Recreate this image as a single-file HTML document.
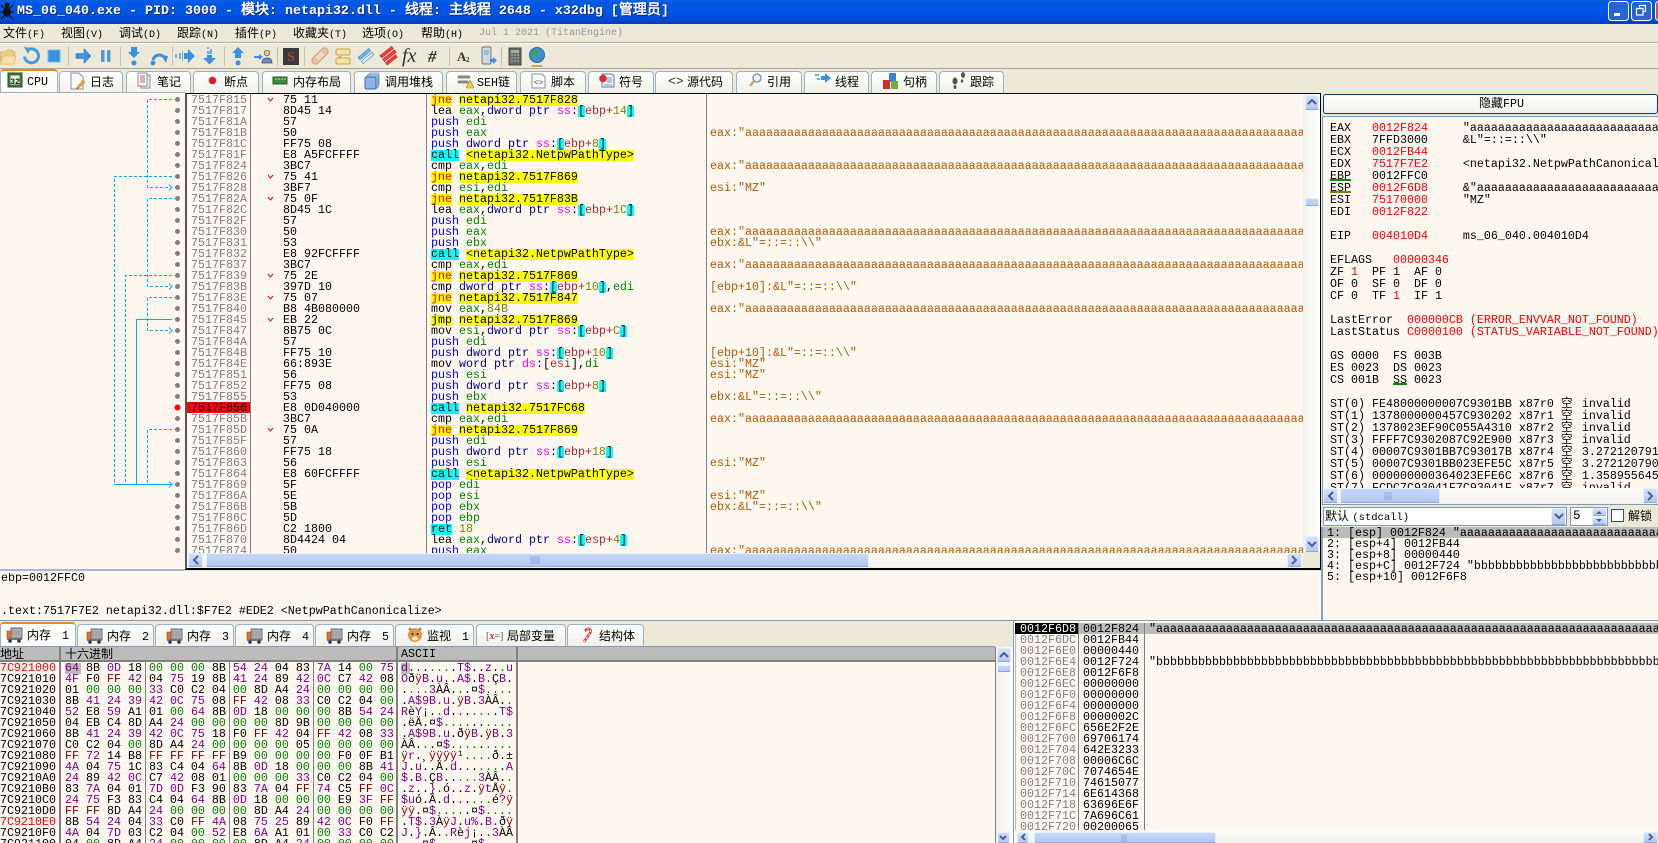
<!DOCTYPE html>
<html><head><meta charset="utf-8"><title>x32dbg</title>
<style>
html,body{margin:0;padding:0}
body{width:1658px;height:843px;overflow:hidden;position:relative;background:#ECE9D8;color:#000;font-family:"Liberation Sans","WenQuanYi Zen Hei",sans-serif}
div,span,pre{position:absolute;box-sizing:border-box}
pre span,pre *{position:static}
pre{margin:0;font:11.67px/11px "Liberation Mono","WenQuanYi Zen Hei",monospace;white-space:pre;overflow:hidden}
.dp{top:94px;height:459px;padding-top:1px}
f{font-size:14px}
i{font-style:normal;color:#008000}
b{font-weight:normal;color:#800080}
s{text-decoration:none;color:#800000}
u{text-decoration:none;color:#800080;background:#bbb;display:inline-block;height:11px;vertical-align:top;padding-right:2px;margin-right:-2px}
j,y,c{display:inline-block;height:11px;line-height:11px;vertical-align:top}
j{background:#ff0;color:#f00}
y{background:#ff0;color:#000}
c{background:#0ff;color:#000}
h{display:inline;font-size:inherit;font-weight:normal;color:#0000ff}
n{color:#000080}
m{color:#f0f}
r{color:#a52a2a}
o{color:#808000}
.bg{background:#FFF8F0}
.menu{top:24px;height:17px;font:12px/17px "WenQuanYi Zen Hei","Noto Sans CJK SC",sans-serif;white-space:pre}
.menu em{font:10px "Liberation Mono",monospace}
.t{top:71px;height:22px;border:1px solid #9db2c6;border-bottom:0;border-radius:4px 4px 0 0;background:linear-gradient(#fff,#f1f0ea)}
.t2{top:624px;height:22px;border:1px solid #9db2c6;border-bottom:0;border-radius:4px 4px 0 0;background:linear-gradient(#fff,#f1f0ea)}
.sel{border-top:2px solid #e68b2c;background:#fdfdfb}
.l{top:71px;height:21px;font:12px/21px "WenQuanYi Zen Hei","Noto Sans CJK SC",sans-serif;white-space:pre}
.l em{font:11.67px "Liberation Mono",monospace}
.l2{top:625px;height:21px;font:12px/21px "WenQuanYi Zen Hei","Noto Sans CJK SC",sans-serif;white-space:pre}
.l2 em{font:11.67px "Liberation Mono",monospace;margin-left:4px}
.v{background:#808080;width:1px}
.trk{background:linear-gradient(90deg,#f1f0ea,#fefefe)}
.trh{background:linear-gradient(#fdfdfb,#f1f0ea)}
.btn{background:linear-gradient(#d5e1fc,#b4c8f6);border:1px solid #e8eefb;border-bottom-color:#8fa8dc;border-radius:2px}
.th{background:linear-gradient(#c8d8fb,#b3c8f5);border:1px solid #e8eefb;border-bottom-color:#8fa8dc;border-radius:2px}
</style></head>
<body>
<!-- title bar -->
<div style="left:0;top:0;width:1658px;height:24px;background:linear-gradient(#0a5fe6 0,#0258e4 3px,#0054e3 55%,#0148d0 85%,#003cb4 100%)"></div>
<span style="left:17px;top:3px;height:18px;font:bold 13.33px/17px 'Liberation Mono','WenQuanYi Zen Hei',monospace;color:#fff;text-shadow:1px 1px #0a2a8a;white-space:pre">MS_06_040.exe - PID: 3000 - <f>模块</f>: netapi32.dll - <f>线程</f>: <f>主线程</f> 2648 - x32dbg [<f>管理员</f>]</span>
<!-- menu -->
<div style="left:0;top:42px;width:1658px;height:1px;background:#b5b29f"></div>
<div style="left:0;top:43px;width:1658px;height:1px;background:#fff"></div>
<div style="left:0;top:68px;width:1658px;height:1px;background:#aca899"></div>
<span class="menu" style="left:3px">文件<em>(F)</em></span>
<span class="menu" style="left:61px">视图<em>(V)</em></span>
<span class="menu" style="left:119px">调试<em>(D)</em></span>
<span class="menu" style="left:177px">跟踪<em>(N)</em></span>
<span class="menu" style="left:235px">插件<em>(P)</em></span>
<span class="menu" style="left:293px">收藏夹<em>(T)</em></span>
<span class="menu" style="left:362px">选项<em>(O)</em></span>
<span class="menu" style="left:421px">帮助<em>(H)</em></span>
<span style="left:479px;top:25px;font:10px/17px 'Liberation Mono',monospace;color:#999;white-space:pre">Jul 1 2021 (TitanEngine)</span>
<!-- tabs -->
<div class="t sel" style="left:0;top:69px;width:58px;height:24px"></div>
<div class="t" style="left:59px;width:64px"></div>
<div class="t" style="left:126px;width:65px"></div>
<div class="t" style="left:193px;width:66px"></div>
<div class="t" style="left:262px;width:89px"></div>
<div class="t" style="left:354px;width:89px"></div>
<div class="t" style="left:446px;width:71px"></div>
<div class="t" style="left:520px;width:66px"></div>
<div class="t" style="left:588px;width:66px"></div>
<div class="t" style="left:655px;width:78px"></div>
<div class="t" style="left:736px;width:66px"></div>
<div class="t" style="left:804px;width:65px"></div>
<div class="t" style="left:871px;width:66px"></div>
<div class="t" style="left:939px;width:65px"></div>
<span class="l" style="left:27px;top:70px"><em>CPU</em></span>
<span class="l" style="left:90px">日志</span>
<span class="l" style="left:157px">笔记</span>
<span class="l" style="left:224px">断点</span>
<span class="l" style="left:293px">内存布局</span>
<span class="l" style="left:385px">调用堆栈</span>
<span class="l" style="left:477px"><em>SEH</em>链</span>
<span class="l" style="left:551px">脚本</span>
<span class="l" style="left:619px">符号</span>
<span class="l" style="left:687px">源代码</span>
<span class="l" style="left:767px">引用</span>
<span class="l" style="left:835px">线程</span>
<span class="l" style="left:903px">句柄</span>
<span class="l" style="left:970px">跟踪</span>
<!-- graph / disasm -->
<div class="bg" style="left:0;top:93px;width:185px;height:476px"></div>
<div style="left:0;top:92px;width:185px;height:1px;background:#9db2c6"></div>
<div style="left:0;top:569px;width:185px;height:2px;background:#a8bacb"></div>
<div class="bg" style="left:185px;top:93px;width:1136px;height:477px;border:1px solid #000;border-width:1px 1px 2px 1px;border-left:2px solid #555"></div>
<div style="left:187px;top:402px;width:63px;height:11px;background:#f00"></div>
<div class="v" style="left:250px;top:94px;height:459px"></div>
<div class="v" style="left:426px;top:94px;height:459px"></div>
<div class="v" style="left:706px;top:94px;height:459px"></div>
<pre class="dp" style="left:191px;width:59px;color:#808080">
7517F815
7517F817
7517F81A
7517F81B
7517F81C
7517F81F
7517F824
7517F826
7517F828
7517F82A
7517F82C
7517F82F
7517F830
7517F831
7517F832
7517F837
7517F839
7517F83B
7517F83E
7517F840
7517F845
7517F847
7517F84A
7517F84B
7517F84E
7517F851
7517F852
7517F855
<span style="color:#000">7517F856</span>
7517F85B
7517F85D
7517F85F
7517F860
7517F863
7517F864
7517F869
7517F86A
7517F86B
7517F86C
7517F86D
7517F870
7517F874</pre>
<pre class="dp" style="left:283px;width:140px">
75 11
8D45 14
57
50
FF75 08
E8 A5FCFFFF
3BC7
75 41
3BF7
75 0F
8D45 1C
57
50
53
E8 92FCFFFF
3BC7
75 2E
397D 10
75 07
B8 4B080000
EB 22
8B75 0C
57
FF75 10
66:893E
56
FF75 08
53
E8 0D040000
3BC7
75 0A
57
FF75 18
56
E8 60FCFFFF
5F
5E
5B
5D
C2 1800
8D4424 04
50</pre>
<pre class="dp" style="left:431px;width:274px">
<j>jne</j> <y>netapi32.7517F828</y>
lea <i>eax</i>,<n>dword ptr</n> <m>ss</m>:<c>[</c><r>ebp+</r><o>14</o><c>]</c>
<h>push</h> <i>edi</i>
<h>push</h> <i>eax</i>
<h>push</h> <n>dword ptr</n> <m>ss</m>:<c>[</c><r>ebp+</r><o>8</o><c>]</c>
<c>call</c> <y>&lt;netapi32.NetpwPathType&gt;</y>
cmp <i>eax</i>,<i>edi</i>
<j>jne</j> <y>netapi32.7517F869</y>
cmp <i>esi</i>,<i>edi</i>
<j>jne</j> <y>netapi32.7517F83B</y>
lea <i>eax</i>,<n>dword ptr</n> <m>ss</m>:<c>[</c><r>ebp+</r><o>1C</o><c>]</c>
<h>push</h> <i>edi</i>
<h>push</h> <i>eax</i>
<h>push</h> <i>ebx</i>
<c>call</c> <y>&lt;netapi32.NetpwPathType&gt;</y>
cmp <i>eax</i>,<i>edi</i>
<j>jne</j> <y>netapi32.7517F869</y>
cmp <n>dword ptr</n> <m>ss</m>:<c>[</c><r>ebp+</r><o>10</o><c>]</c>,<i>edi</i>
<j>jne</j> <y>netapi32.7517F847</y>
mov <i>eax</i>,<o>84B</o>
<y>jmp</y> <y>netapi32.7517F869</y>
mov <i>esi</i>,<n>dword ptr</n> <m>ss</m>:<c>[</c><r>ebp+</r><o>C</o><c>]</c>
<h>push</h> <i>edi</i>
<h>push</h> <n>dword ptr</n> <m>ss</m>:<c>[</c><r>ebp+</r><o>10</o><c>]</c>
mov <n>word ptr</n> <m>ds</m>:[<r>esi</r>],<i>di</i>
<h>push</h> <i>esi</i>
<h>push</h> <n>dword ptr</n> <m>ss</m>:<c>[</c><r>ebp+</r><o>8</o><c>]</c>
<h>push</h> <i>ebx</i>
<c>call</c> <y>netapi32.7517FC68</y>
cmp <i>eax</i>,<i>edi</i>
<j>jne</j> <y>netapi32.7517F869</y>
<h>push</h> <i>edi</i>
<h>push</h> <n>dword ptr</n> <m>ss</m>:<c>[</c><r>ebp+</r><o>18</o><c>]</c>
<h>push</h> <i>esi</i>
<c>call</c> <y>&lt;netapi32.NetpwPathType&gt;</y>
<h>pop</h> <i>edi</i>
<h>pop</h> <i>esi</i>
<h>pop</h> <i>ebx</i>
<h>pop</h> <i>ebp</i>
<c>ret</c> <o>18</o>
lea <i>eax</i>,<n>dword ptr</n> <m>ss</m>:<c>[</c><r>esp+</r><o>4</o><c>]</c>
<h>push</h> <i>eax</i></pre>
<pre class="dp" style="left:710px;width:593px;color:#b05800">



eax:"aaaaaaaaaaaaaaaaaaaaaaaaaaaaaaaaaaaaaaaaaaaaaaaaaaaaaaaaaaaaaaaaaaaaaaaaaaaaaaaaaaaaaaaa


eax:"aaaaaaaaaaaaaaaaaaaaaaaaaaaaaaaaaaaaaaaaaaaaaaaaaaaaaaaaaaaaaaaaaaaaaaaaaaaaaaaaaaaaaaaa

esi:"MZ"



eax:"aaaaaaaaaaaaaaaaaaaaaaaaaaaaaaaaaaaaaaaaaaaaaaaaaaaaaaaaaaaaaaaaaaaaaaaaaaaaaaaaaaaaaaaa
ebx:&amp;L"=::=::\\"

eax:"aaaaaaaaaaaaaaaaaaaaaaaaaaaaaaaaaaaaaaaaaaaaaaaaaaaaaaaaaaaaaaaaaaaaaaaaaaaaaaaaaaaaaaaa

[ebp+10]:&amp;L"=::=::\\"

eax:"aaaaaaaaaaaaaaaaaaaaaaaaaaaaaaaaaaaaaaaaaaaaaaaaaaaaaaaaaaaaaaaaaaaaaaaaaaaaaaaaaaaaaaaa



[ebp+10]:&amp;L"=::=::\\"
esi:"MZ"
esi:"MZ"

ebx:&amp;L"=::=::\\"

eax:"aaaaaaaaaaaaaaaaaaaaaaaaaaaaaaaaaaaaaaaaaaaaaaaaaaaaaaaaaaaaaaaaaaaaaaaaaaaaaaaaaaaaaaaa



esi:"MZ"


esi:"MZ"
ebx:&amp;L"=::=::\\"



eax:"aaaaaaaaaaaaaaaaaaaaaaaaaaaaaaaaaaaaaaaaaaaaaaaaaaaaaaaaaaaaaaaaaaaaaaaaaaaaaaaaaaaaaaaa</pre>
<!-- disasm scrollbars -->
<div class="trk" style="left:1303px;top:94px;width:17px;height:458px"></div>
<div class="btn" style="left:1305px;top:95px;width:14px;height:15px"></div>
<div class="th" style="left:1305px;top:198px;width:14px;height:8px"></div>
<div class="btn" style="left:1305px;top:536px;width:14px;height:16px"></div>
<div style="left:1303px;top:552px;width:17px;height:16px;background:#ECE9D8"></div>
<div class="trh" style="left:187px;top:553px;width:1116px;height:15px"></div>
<div class="btn" style="left:188px;top:553px;width:15px;height:14px"></div>
<div class="th" style="left:206px;top:553px;width:663px;height:14px"></div>
<div class="btn" style="left:1287px;top:553px;width:15px;height:14px"></div>
<!-- register panel -->
<div style="left:1323px;top:94px;width:335px;height:20px;border:1px solid #003c74;border-radius:3px;background:linear-gradient(#fff,#f0f0ea)"></div>
<span style="left:1479px;top:96px;font:12px/16px 'WenQuanYi Zen Hei','Liberation Mono',sans-serif;white-space:pre">隐藏<em style="font:11.67px 'Liberation Mono',monospace">FPU</em></span>
<div class="bg" style="left:1322px;top:116px;width:336px;height:389px;border:1px solid #7f9db9;border-right:0"></div>
<div style="left:1372px;top:159px;width:56px;height:12px;background:#eee"></div>
<pre style="left:1330px;top:122px;width:328px;height:366px;line-height:12px">
EAX   <span style="color:#f00">0012F824</span>     "aaaaaaaaaaaaaaaaaaaaaaaaaaaaaaaaaaaaaa
EBX   7FFD3000     &amp;L"=::=::\\"
ECX   <span style="color:#f00">0012FB44</span>
EDX   <span style="color:#f00">7517F7E2</span>     &lt;netapi32.NetpwPathCanonicalize&gt;
EBP   0012FFC0
ESP   <span style="color:#f00">0012F6D8</span>     &amp;"aaaaaaaaaaaaaaaaaaaaaaaaaaaaaaaaaaaaa
ESI   <span style="color:#f00">75170000</span>     "MZ"
EDI   <span style="color:#f00">0012F822</span>

EIP   <span style="color:#f00">004010D4</span>     ms_06_040.004010D4

EFLAGS   <span style="color:#f00">00000346</span>
ZF <span style="color:#f00">1</span>  PF 1  AF 0
OF 0  SF 0  DF 0
CF 0  TF <span style="color:#f00">1</span>  IF 1

LastError  <span style="color:#f00">000000CB (ERROR_ENVVAR_NOT_FOUND)</span>
LastStatus <span style="color:#f00">C0000100 (STATUS_VARIABLE_NOT_FOUND)</span>

GS 0000  FS 003B
ES 0023  DS 0023
CS 001B  SS 0023

ST(0) FE48000000007C9301BB x87r0 <span style="display:inline-block;width:14px">空</span> invalid
ST(1) 1378000000457C930202 x87r1 <span style="display:inline-block;width:14px">空</span> invalid
ST(2) 1378023EF90C055A4310 x87r2 <span style="display:inline-block;width:14px">空</span> invalid
ST(3) FFFF7C9302087C92E900 x87r3 <span style="display:inline-block;width:14px">空</span> invalid
ST(4) 00007C9301BB7C93017B x87r4 <span style="display:inline-block;width:14px">空</span> 3.2721207912
ST(5) 00007C9301BB023EFE5C x87r5 <span style="display:inline-block;width:14px">空</span> 3.2721207905
ST(6) 000000000364023EFE6C x87r6 <span style="display:inline-block;width:14px">空</span> 1.3589556451
ST(7) FCDC7C93041F7C93041F x87r7 <span style="display:inline-block;width:14px">空</span> invalid</pre>
<div style="left:1330px;top:179px;width:21px;height:2px;background:#009000"></div>
<div style="left:1330px;top:191px;width:21px;height:2px;background:#808000"></div>
<div style="left:1393px;top:383px;width:14px;height:2px;background:#009000"></div>
<div class="trh" style="left:1323px;top:488px;width:335px;height:16px"></div>
<div class="btn" style="left:1323px;top:488px;width:15px;height:15px"></div>
<div class="th" style="left:1340px;top:488px;width:100px;height:15px"></div>
<div class="btn" style="left:1643px;top:488px;width:15px;height:15px"></div>
<!-- call convention row -->
<div style="left:1323px;top:507px;width:244px;height:19px;background:#fff;border:1px solid #7f9db9"></div>
<span style="left:1325px;top:508px;font:12px/17px 'WenQuanYi Zen Hei',sans-serif;white-space:pre">默认 <em style="font:10.5px 'Liberation Mono',monospace">(stdcall)</em></span>
<div class="btn" style="left:1551px;top:508px;width:15px;height:17px"></div>
<div style="left:1570px;top:507px;width:38px;height:19px;background:#fff;border:1px solid #7f9db9"></div>
<span style="left:1573px;top:508px;font:12.5px/17px 'Liberation Mono',monospace">5</span>
<div class="btn" style="left:1592px;top:508px;width:15px;height:8px"></div>
<div class="btn" style="left:1592px;top:517px;width:15px;height:8px"></div>
<div style="left:1611px;top:509px;width:13px;height:13px;background:#fff;border:1px solid #1c5180"></div>
<span style="left:1628px;top:508px;font:12px/17px 'WenQuanYi Zen Hei',sans-serif">解锁</span>
<div class="bg" style="left:1321px;top:527px;width:337px;height:94px;border-left:2px solid #8aa2ba"></div>
<div style="left:1323px;top:527px;width:335px;height:11px;background:#bbb"></div>
<pre style="left:1327px;top:527px;padding-top:1px;width:331px;height:61px">
1: [esp] 0012F824 "aaaaaaaaaaaaaaaaaaaaaaaaaaaaaaaaaaaaaaaaaaaaa
2: [esp+4] 0012FB44
3: [esp+8] 00000440
4: [esp+C] 0012F724 "bbbbbbbbbbbbbbbbbbbbbbbbbbbbbbbbbbbbbbbbbb
5: [esp+10] 0012F6F8</pre>
<!-- info panel -->
<div class="bg" style="left:0;top:571px;width:1321px;height:50px"></div>
<pre style="left:1px;top:573px;width:1000px;height:47px">
ebp=0012FFC0


.text:7517F7E2 netapi32.dll:$F7E2 #EDE2 &lt;NetpwPathCanonicalize&gt;</pre>
<div style="left:0;top:620px;width:1658px;height:1px;background:#7f9db9"></div>
<!-- memory tabs -->
<div class="t2 sel" style="left:0;top:622px;width:76px;height:25px"></div>
<div class="t2" style="left:77px;width:77px"></div>
<div class="t2" style="left:155px;width:79px"></div>
<div class="t2" style="left:235px;width:79px"></div>
<div class="t2" style="left:315px;width:79px"></div>
<div class="t2" style="left:395px;width:79px"></div>
<div class="t2" style="left:476px;width:90px"></div>
<div class="t2" style="left:567px;width:77px"></div>
<span class="l2" style="left:27px;top:624px">内存<em> 1</em></span>
<span class="l2" style="left:107px">内存<em> 2</em></span>
<span class="l2" style="left:187px">内存<em> 3</em></span>
<span class="l2" style="left:267px">内存<em> 4</em></span>
<span class="l2" style="left:347px">内存<em> 5</em></span>
<span class="l2" style="left:427px">监视<em> 1</em></span>
<span class="l2" style="left:507px">局部变量</span>
<span class="l2" style="left:599px">结构体</span>
<!-- hex dump -->
<div style="left:0;top:646px;width:995px;height:1px;background:#7f9db9"></div>
<div class="bg" style="left:0;top:647px;width:1014px;height:196px"></div>
<div style="left:0;top:647px;width:995px;height:13px;background:#bcbcbc"></div>
<div style="left:0;top:660px;width:995px;height:2px;background:#808080"></div>
<div class="v" style="left:59px;top:647px;height:196px;width:2px"></div>
<div class="v" style="left:145px;top:662px;height:181px"></div>
<div class="v" style="left:229px;top:662px;height:181px"></div>
<div class="v" style="left:313px;top:662px;height:181px"></div>
<div class="v" style="left:396px;top:647px;height:196px;width:2px"></div>
<div class="v" style="left:516px;top:647px;height:196px;width:2px"></div>
<span style="left:0;top:647px;font:12px/14px 'WenQuanYi Zen Hei',sans-serif">地址</span>
<span style="left:65px;top:647px;font:12px/14px 'WenQuanYi Zen Hei',sans-serif">十六进制</span>
<span style="left:401px;top:647px;font:11.67px/14px 'Liberation Mono',monospace">ASCII</span>
<pre style="left:0;top:662px;padding-top:1px;width:59px;height:181px">
<span style="color:#f00">7C921000</span>
7C921010
7C921020
7C921030
7C921040
7C921050
7C921060
7C921070
7C921080
7C921090
7C9210A0
7C9210B0
7C9210C0
7C9210D0
<span style="color:#f00">7C9210E0</span>
7C9210F0
7C921100</pre>
<pre style="left:65px;top:662px;padding-top:1px;width:331px;height:181px">
<u>64</u> 8B <b>0D</b> 18 <i>00 00 00</i> 8B <b>54 24</b> 04 83 <b>7A</b> 14 <i>00</i> <b>75</b>
<b>4F</b> F0 <s>FF</s> <b>42</b> 04 <b>75</b> 19 8B <b>41 24</b> 89 <b>42 0C</b> C7 <b>42</b> 08
01 <i>00 00 00</i> <b>33</b> C0 C2 04 <i>00</i> 8D A4 <b>24</b> <i>00 00 00 00</i>
8B <b>41 24 39 42 0C 75</b> 08 <s>FF</s> <b>42</b> 08 <b>33</b> C0 C2 04 <i>00</i>
<b>52</b> E8 <b>59</b> A1 01 <i>00</i> <b>64</b> 8B <b>0D</b> 18 <i>00 00 00</i> 8B <b>54 24</b>
04 EB C4 8D A4 <b>24</b> <i>00 00 00 00</i> 8D 9B <i>00 00 00 00</i>
8B <b>41 24 39 42 0C 75</b> 18 F0 <s>FF</s> <b>42</b> 04 <s>FF</s> <b>42</b> 08 <b>33</b>
C0 C2 04 <i>00</i> 8D A4 <b>24</b> <i>00 00 00 00</i> 05 <i>00 00 00 00</i>
<s>FF</s> <b>72</b> 14 B8 <s>FF FF FF FF</s> B9 <i>00 00 00 00</i> F0 0F B1
<b>4A</b> 04 <b>75</b> 1C 83 C4 04 <b>64</b> 8B <b>0D</b> 18 <i>00 00 00</i> 8B <b>41</b>
<b>24</b> 89 <b>42 0C</b> C7 <b>42</b> 08 01 <i>00 00 00</i> <b>33</b> C0 C2 04 <i>00</i>
83 <b>7A</b> 04 01 <b>7D 0D</b> F3 90 83 <b>7A</b> 04 <s>FF</s> <b>74</b> C5 <s>FF</s> <b>0C</b>
<b>24 75</b> F3 83 C4 04 <b>64</b> 8B <b>0D</b> 18 <i>00 00 00</i> E9 <b>3F</b> <s>FF</s>
<s>FF FF</s> 8D A4 <b>24</b> <i>00 00 00 00</i> 8D A4 <b>24</b> <i>00 00 00 00</i>
8B <b>54 24</b> 04 <b>33</b> C0 <s>FF</s> <b>4A</b> 08 <b>75 25</b> 89 <b>42 0C</b> F0 <s>FF</s>
<b>4A</b> 04 <b>7D</b> 03 C2 04 <i>00</i> <b>52</b> E8 <b>6A</b> A1 01 <i>00</i> <b>33</b> C0 C2
04 <i>00</i> 8D A4 <b>24</b> <i>00 00 00 00</i> 8D A4 <b>24</b> <i>00 00 00 00</i></pre>
<pre style="left:401px;top:662px;padding-top:1px;width:115px;height:181px">
<u>d</u>.<b>.</b>.<i>...</i>.<b>T$</b>..<b>z</b>.<i>.</i><b>u</b>
<b>O</b>ð<s>ÿ</s><b>B</b>.<b>u</b>..<b>A$</b>.<b>B.</b>Ç<b>B</b>.
.<i>...</i><b>3</b>ÀÂ.<i>.</i>.¤<b>$</b><i>....</i>
.<b>A$9B.u</b>.<s>ÿ</s><b>B</b>.<b>3</b>ÀÂ.<i>.</i>
<b>R</b>è<b>Y</b>¡.<i>.</i><b>d</b>.<b>.</b>.<i>...</i>.<b>T$</b>
.ëÄ.¤<b>$</b><i>....</i>..<i>....</i>
.<b>A$9B.u</b>.ð<s>ÿ</s><b>B</b>.<s>ÿ</s><b>B</b>.<b>3</b>
ÀÂ.<i>.</i>.¤<b>$</b><i>....</i>.<i>....</i>
<s>ÿ</s><b>r</b>.¸<s>ÿÿÿÿ</s>¹<i>....</i>ð.±
<b>J</b>.<b>u</b>..Ä.<b>d</b>.<b>.</b>.<i>...</i>.<b>A</b>
<b>$</b>.<b>B.</b>Ç<b>B</b>..<i>...</i><b>3</b>ÀÂ.<i>.</i>
.<b>z</b>..<b>}.</b>ó..<b>z</b>.<s>ÿ</s><b>t</b>Å<s>ÿ</s><b>.</b>
<b>$u</b>ó.Ä.<b>d</b>.<b>.</b>.<i>...</i>é<b>?</b><s>ÿ</s>
<s>ÿÿ</s>.¤<b>$</b><i>....</i>.¤<b>$</b><i>....</i>
.<b>T$</b>.<b>3</b>À<s>ÿ</s><b>J</b>.<b>u%</b>.<b>B.</b>ð<s>ÿ</s>
<b>J</b>.<b>}</b>.Â.<i>.</i><b>R</b>è<b>j</b>¡.<i>.</i><b>3</b>ÀÂ
.<i>.</i>.¤<b>$</b><i>....</i>.¤<b>$</b><i>....</i></pre>
<!-- memory scrollbar -->
<div class="trk" style="left:995px;top:647px;width:18px;height:196px;border-left:1px solid #808080"></div>
<div class="btn" style="left:997px;top:648px;width:14px;height:14px"></div>
<div class="th" style="left:997px;top:665px;width:14px;height:7px"></div>
<div class="btn" style="left:997px;top:832px;width:13px;height:11px"></div>
<!-- stack -->
<div class="bg" style="left:1013px;top:621px;width:645px;height:222px;border-left:1px solid #7f9db9"></div>
<div style="left:1015px;top:623px;width:63px;height:11px;background:#000"></div>
<div style="left:1079px;top:623px;width:579px;height:11px;background:#bbb"></div>
<div class="v" style="left:1015px;top:634px;height:196px;background:#bbb"></div>
<div class="v" style="left:1078px;top:623px;height:207px"></div>
<div class="v" style="left:1144px;top:623px;height:207px"></div>
<pre style="left:1020px;top:623px;padding-top:1px;width:58px;height:207px;color:#808080">
<span style="color:#fff">0012F6D8</span>
0012F6DC
0012F6E0
0012F6E4
0012F6E8
0012F6EC
0012F6F0
0012F6F4
0012F6F8
0012F6FC
0012F700
0012F704
0012F708
0012F70C
0012F710
0012F714
0012F718
0012F71C
0012F720</pre>
<pre style="left:1083px;top:623px;padding-top:1px;width:60px;height:207px">
0012F824
0012FB44
00000440
0012F724
0012F6F8
00000000
00000000
00000000
0000002C
656E2F2E
69706174
642E3233
00006C6C
7074654E
74615077
6E614368
63696E6F
7A696C61
00200065</pre>
<pre style="left:1149px;top:623px;padding-top:1px;width:509px;height:61px">
"aaaaaaaaaaaaaaaaaaaaaaaaaaaaaaaaaaaaaaaaaaaaaaaaaaaaaaaaaaaaaaaaaaaaaaaaaaaaaaaa


"bbbbbbbbbbbbbbbbbbbbbbbbbbbbbbbbbbbbbbbbbbbbbbbbbbbbbbbbbbbbbbbbbbbbbbbbbbbbbbbb</pre>
<div class="trh" style="left:1016px;top:831px;width:642px;height:12px"></div>
<div class="btn" style="left:1017px;top:832px;width:12px;height:11px"></div>
<div class="th" style="left:1034px;top:832px;width:182px;height:11px"></div>
<div class="btn" style="left:1643px;top:832px;width:15px;height:11px"></div>
<!-- overlay icons and graph -->
<svg width="1658" height="843" viewBox="0 0 1658 843" style="position:absolute;left:0;top:0">
<!-- title icon -->
<g fill="#111"><ellipse cx="7" cy="12" rx="4" ry="5"/><circle cx="7" cy="5" r="2.5"/></g>
<path d="M1 5l3 3M13 5l-3 3M0 12h3M14 12h-3M1 19l3-3M13 19l-3-3" stroke="#111" fill="none"/>
<!-- window controls -->
<rect x="1608.5" y="1.5" width="20" height="19" rx="3" fill="#2a62d8" stroke="#fff"/>
<rect x="1614" y="13" width="6" height="3" fill="#fff"/>
<rect x="1631.5" y="1.5" width="20" height="19" rx="3" fill="#2a62d8" stroke="#fff"/>
<path d="M1639.5 7.5V5.5h6v6h-2M1636.5 8.5h6.5v6.5h-6.5z" fill="none" stroke="#fff" stroke-width="1.2"/>
<rect x="1655.5" y="1.5" width="10" height="19" rx="3" fill="#d9542c" stroke="#fff"/>
<!-- toolbar separators -->
<g fill="#c5c2b0"><rect x="68" y="47" width="1" height="19"/><rect x="120" y="47" width="1" height="19"/><rect x="172" y="47" width="1" height="19"/><rect x="224" y="47" width="1" height="19"/><rect x="277" y="47" width="1" height="19"/><rect x="304" y="47" width="1" height="19"/><rect x="449" y="47" width="1" height="19"/><rect x="501" y="47" width="1" height="19"/></g>
<!-- folder -->
<path d="M0 52h5l2-2h5l1 2h2l-1 12H1z" fill="#e9cd85" stroke="#d3b670"/>
<path d="M1 64l2-8h13l-2 8z" fill="#f6e2a6" stroke="#d3b670" stroke-width=".6"/>
<!-- restart -->
<path d="M27 50.5a7 7 0 1 1-2.5 6" fill="none" stroke="#4a9ae0" stroke-width="3"/>
<path d="M24 47l7 1-3 6z" fill="#4a9ae0"/>
<!-- stop -->
<rect x="48" y="50" width="12" height="12" fill="#3a93e2" stroke="#7cbcf0"/>
<!-- run -->
<path d="M76 53.5h8v-5l7 7.5-7 7.500v-5h-8z" fill="#3d90de" stroke="#2c76bd" stroke-width=".5"/>
<!-- pause -->
<rect x="101" y="50" width="3.5" height="12" rx="1" fill="#4a9ae0"/><rect x="107" y="50" width="3.5" height="12" rx="1" fill="#4a9ae0"/>
<!-- step into -->
<path d="M131 47h6v5h3l-6 6-6-6h3z" fill="#3d90de"/><circle cx="134" cy="63" r="2.5" fill="#3d90de"/>
<!-- step over -->
<path d="M153 60a6.500 6.500 0 0 1 11-3" fill="none" stroke="#3d90de" stroke-width="3"/><path d="M161 55l7 1-2 7z" fill="#3d90de"/><circle cx="153" cy="63" r="2.400" fill="#3d90de"/>
<!-- trace arrows -->
<path d="M184 53h4v-4l7 7-7 7v-4h-4z" fill="#3d90de"/><path d="M179 53h2v6h-2zM175 54h2v4h-2zM182 51h1v10h-1z" fill="#6db1ea"/>
<path d="M207 55h5v3h4l-6.500 6.500L203 58h4z" fill="#3d90de"/><path d="M207 47h2v2h-2zM210 49h2v2h-2zM207 51h5v3h-5z" fill="#6db1ea"/>
<!-- up arrow + dot -->
<path d="M238 47l6 6h-3v5h-6v-5h-3z" fill="#3d90de"/><circle cx="238" cy="63" r="2.500" fill="#3d90de"/>
<!-- user -->
<path d="M254 56h5v-2l4 3-4 3v-2h-5z" fill="#3d90de"/><circle cx="267" cy="53" r="2.800" fill="#e8c49a" stroke="#557" stroke-width=".7"/><path d="M262 63c0-4 2-5 5-5s5 1 5 5z" fill="#6d8fbb" stroke="#446" stroke-width=".7"/>
<!-- S -->
<rect x="283" y="48" width="16" height="17" fill="#3a3a3a"/>
<text x="291" y="61" text-anchor="middle" font-family="Liberation Serif" font-weight="bold" font-size="14" fill="#a04545">S</text>
<!-- bandage -->
<g transform="rotate(-45 320 56)"><rect x="310" y="52.500" width="20" height="7" rx="3.500" fill="#e8c2a0" stroke="#c99c76"/><rect x="316" y="53.500" width="8" height="5" fill="#f3d9c2"/></g>
<!-- notes -->
<rect x="336" y="49" width="14" height="6" rx="1.5" fill="#f6e3a0" stroke="#c7a64e"/><rect x="336" y="58" width="14" height="6" rx="1.5" fill="#f6e3a0" stroke="#c7a64e"/><path d="M339 55v3l3-3" fill="#f6e3a0" stroke="#c7a64e"/>
<!-- tags -->
<g transform="rotate(-40 366 56)"><rect x="359" y="52" width="14" height="3" fill="#6ab6ea" stroke="#4a8fc5" stroke-width=".7"/><rect x="359" y="57" width="14" height="3" fill="#dff0fb" stroke="#4a8fc5" stroke-width=".7"/></g>
<!-- red bookmarks -->
<g transform="rotate(-38 389 56)" fill="#ee3f3f" stroke="#c92222" stroke-width=".5"><rect x="382" y="50" width="15" height="3"/><rect x="382" y="54.500" width="15" height="3"/><rect x="382" y="59" width="13" height="3"/></g>
<text x="402" y="62" font-family="Liberation Serif" font-style="italic" font-size="20" fill="#333">fx</text>
<text x="428" y="62" font-family="Liberation Serif" font-style="italic" font-weight="bold" font-size="17" fill="#333">#</text>
<text x="457" y="61" font-family="Liberation Serif" font-weight="bold" font-size="13" fill="#333">A</text><text x="466" y="62" font-family="Liberation Serif" font-weight="bold" font-size="7" fill="#333">2</text>
<!-- phone -->
<rect x="482" y="47" width="9" height="17" rx="1.5" fill="#d4d8de" stroke="#717a86"/><rect x="484" y="50" width="5" height="5" fill="#8ec1e8"/><path d="M490 59h3v-2l4 3.500-4 3.500v-2h-3z" fill="#3d90de"/>
<!-- calc -->
<rect x="509" y="48" width="12" height="17" fill="#666a66" stroke="#444"/><rect x="511" y="50" width="8" height="3" fill="#9cb29c"/><path d="M511 55h8M511 58h8M511 61h8" stroke="#bbb" stroke-dasharray="2 1"/>
<!-- globe -->
<circle cx="537" cy="55" r="7.500" fill="#3f8fd8" stroke="#2a6aa6"/><path d="M533 50c3-2 6 0 5 3s-5 2-6 5-1-6 1-8zM539 58c2-1 4-1 4 0s-3 4-4 3z" fill="#3fa34a"/><path d="M532 65h10l1 2h-12z" fill="#caa56a"/>
<!-- tab icons -->
<rect x="8" y="73" width="14" height="14" fill="#3f7a3f" stroke="#1f4f1f"/><rect x="10.500" y="75.500" width="9" height="9" fill="#f0f0e0"/>
<text x="15" y="84" text-anchor="middle" font-family="Liberation Mono" font-weight="bold" font-size="8" fill="#222">32</text>
<path d="M71 73h8l4 4v12H71z" fill="#fafafa" stroke="#8a9099"/><path d="M77 87l6-7 2 2-6 6-3 1z" fill="#e8a33a" stroke="#a8711c" stroke-width=".5"/>
<path d="M141 75h9v13h-9z" fill="#e8ebf2" stroke="#8a9099"/><path d="M138 73h9v13h-9z" fill="#fafafa" stroke="#8a9099"/><path d="M140 76h5M140 78h5M140 80h5M140 82h5" stroke="#b06a6a"/>
<circle cx="212.500" cy="80.500" r="3.800" fill="#d81e1e"/>
<rect x="273" y="77" width="14" height="7" fill="#3d8a3d" stroke="#1e5a1e"/><path d="M275 79h2M278 79h2M281 79h2M284 79h2" stroke="#c8e8a8"/>
<rect x="369" y="73" width="10" height="13" rx="1.500" fill="#d5e3f5" stroke="#7b9bc8"/><rect x="367" y="75" width="11" height="13" rx="1.500" fill="#b8cfee" stroke="#6c8fc2"/><rect x="365" y="77" width="11" height="12" rx="1.500" fill="#90b3e6" stroke="#3a69b3"/>
<path d="M459 77h10M459 82h8" stroke="#888" stroke-width="3" stroke-linecap="round"/><path d="M466 88l4-8 4 8z" fill="#f5d040" stroke="#8a7420" stroke-width=".6"/>
<path d="M532 74h10l3 3v11h-13z" fill="#fafafa" stroke="#8a9099"/><text x="538.500" y="85" text-anchor="middle" font-family="Liberation Mono" font-size="8" fill="#445">&lt;&gt;</text>
<path d="M602 74h10l2 2v11h-12z" fill="#eef2f8" stroke="#5f78a8"/><path d="M607 78h5M607 80h5M607 82h5M604 85h8" stroke="#5f78a8" stroke-width=".8"/><circle cx="603" cy="78.500" r="3.800" fill="#d83030"/>
<text x="668" y="85" font-family="Liberation Mono" font-size="13" fill="#333">&lt;&gt;</text>
<circle cx="757" cy="78" r="4" fill="#eef4fb" stroke="#8a99ad" stroke-width="1.500"/><path d="M754 81l-4 5" stroke="#c7a87a" stroke-width="2.500"/>
<path d="M821 76h4v-3l6 5-6 5v-3h-4z" fill="#3d90de"/><path d="M815 74h4v2h-4zM817 78h3v2h-3z" fill="#6db1ea"/>
<rect x="889" y="73" width="7" height="9" fill="#3d80d8"/><rect x="883" y="80" width="7" height="9" fill="#d82a2a"/><rect x="891" y="81" width="7" height="8" fill="#6cb03a"/>
<g fill="#555"><ellipse cx="955" cy="81" rx="2.500" ry="3.500"/><ellipse cx="955" cy="87" rx="1.500" ry="2"/><ellipse cx="963" cy="75" rx="2" ry="3"/><ellipse cx="962" cy="81" rx="1.200" ry="1.800"/></g>
<!-- memory tab icons -->
<g id="tr"><rect x="11" y="628" width="11" height="10" fill="#b0b2b8" stroke="#6a6d75"/><path d="M13 630v6M16 630v6M19 630v6" stroke="#8a8d95"/><path d="M7 631h4v7H7z" fill="#e0762c" stroke="#8a5020" stroke-width=".6"/><rect x="7" y="638" width="15" height="2" fill="#777"/><circle cx="10" cy="641" r="1.800" fill="#335"/><circle cx="19" cy="641" r="1.800" fill="#335"/></g>
<use href="#tr" x="80" y="1"/><use href="#tr" x="160" y="1"/><use href="#tr" x="240" y="1"/><use href="#tr" x="320" y="1"/>
<circle cx="415" cy="635" r="7" fill="#d99a4c"/><path d="M408 630l2-3 2 3zM418 630l2-3 2 3z" fill="#b87a30"/><circle cx="412.500" cy="634" r="1" fill="#222"/><circle cx="417.500" cy="634" r="1" fill="#222"/><ellipse cx="415" cy="638.500" rx="3" ry="2" fill="#f5e6c8"/>
<text x="486" y="639" font-family="Liberation Serif" font-size="10" fill="#555">[<tspan fill="#b03030" font-style="italic" font-weight="bold">x</tspan>=]</text>
<path d="M584 642l6-9c2-3-1-5-3-4l-2 2" fill="none" stroke="#d83a3a" stroke-width="2.500"/>
<path d="M584 642l6-9c2-3-1-5-3-4" fill="none" stroke="#fff" stroke-width="1" stroke-dasharray="2 2"/>
<!-- scrollbar chevrons -->
<g fill="none" stroke="#4d6185" stroke-width="2">
<path d="M1308 104l4-4 4 4"/><path d="M1308 542l4 4 4-4"/>
<path d="M198 556l-4 4 4 4"/><path d="M1292 556l4 4-4 4"/>
<path d="M1333 492l-4 4 4 4"/><path d="M1648 492l4 4-4 4"/>
<path d="M1555 514l4 4 4-4"/>
<path d="M1000 657l4-4 4 4"/><path d="M1000 836l3 3 3-3"/>
<path d="M1025 834l-3 3 3 3"/><path d="M1649 834l3 3-3 3"/>
</g>
<path d="M1596 514l3-3 3 3z" fill="#4d6185"/><path d="M1596 519l3 3 3-3z" fill="#4d6185"/>
<path d="M531 556v8M533 556v8M535 556v8M537 556v8M539 556v8" stroke="#8fa5d8"/>
<path d="M1385 492v8M1387 492v8M1389 492v8M1391 492v8" stroke="#8fa5d8"/>
<path d="M1122 835v8M1124 835v8M1126 835v8" stroke="#8fa5d8"/>
<!-- graph -->
<g fill="none" stroke="#00aaff" stroke-width="1">
<g stroke-dasharray="3 2">
<path d="M172 99.500H147.500V187.500H170"/>
<path d="M172 176.500H114.500V484.500"/>
<path d="M172 198.500H147.500V286.500H170"/>
<path d="M172 275.500H125.500V484.500"/>
<path d="M172 297.500H147.500V330.500H170"/>
<path d="M172 429.500H147.500V484.500"/>
</g>
<path d="M172 319.500H136.500V484.500"/>
<path d="M114.500 484.500H172"/>
<path d="M169 184.500l3 3-3 3M169 283.500l3 3-3 3M169 327.500l3 3-3 3M169 481.500l3 3-3 3"/>
</g>
<line x1="177.500" y1="99.500" x2="177.500" y2="551" stroke="#808080" stroke-width="5" stroke-linecap="round" stroke-dasharray="0 11"/>
<circle cx="177.500" cy="407.500" r="3" fill="#f00"/>
<!-- jump markers -->
<g fill="none" stroke="#f00" stroke-width="1">
<path d="M268 98l2.500 3 2.500-3M268 175l2.500 3 2.500-3M268 197l2.500 3 2.500-3M268 274l2.500 3 2.500-3M268 296l2.500 3 2.500-3M268 318l2.500 3 2.500-3M268 428l2.500 3 2.500-3"/>
</g>
</svg>
</body></html>
